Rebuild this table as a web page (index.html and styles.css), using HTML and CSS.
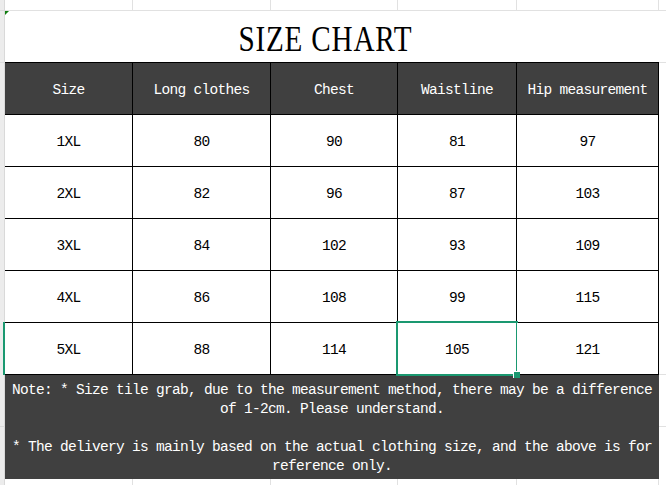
FILE: index.html
```html
<!DOCTYPE html>
<html>
<head>
<meta charset="utf-8">
<link rel="stylesheet" href="styles.css">
</head>
<body>
<div class="screen">
  <div class="rowheads">
    <div class="rh rh-a"></div>
    <div class="rh rh-b"></div>
    <div class="rh rh-c"></div>
    <div class="rh rh-sel"></div>
    <div class="rh rh-d"></div>
    <div class="rh rh-rest"></div>
  </div>
  <div class="sheet">
    <div class="band">
      <span></span><span></span><span></span><span></span><span></span>
    </div>
    <div class="title">
      <span class="flag"></span>
      <h1>SIZE CHART</h1>
    </div>
    <div class="chart">
      <div class="cell head">Size</div>
      <div class="cell head">Long clothes</div>
      <div class="cell head">Chest</div>
      <div class="cell head">Waistline</div>
      <div class="cell head">Hip measurement</div>

      <div class="cell">1XL</div><div class="cell">80</div><div class="cell">90</div><div class="cell">81</div><div class="cell">97</div>
      <div class="cell">2XL</div><div class="cell">82</div><div class="cell">96</div><div class="cell">87</div><div class="cell">103</div>
      <div class="cell">3XL</div><div class="cell">84</div><div class="cell">102</div><div class="cell">93</div><div class="cell">109</div>
      <div class="cell">4XL</div><div class="cell">86</div><div class="cell">108</div><div class="cell">99</div><div class="cell">115</div>
      <div class="cell">5XL</div><div class="cell">88</div><div class="cell">114</div><div class="cell selected">105</div><div class="cell">121</div>
    </div>
    <div class="note">
      <p>Note: * Size tile grab, due to the measurement method, there may be a difference of 1-2cm. Please understand.</p>
      <p>* The delivery is mainly based on the actual clothing size, and the above is for reference only.</p>
    </div>
    <div class="band bottom">
      <span></span><span></span><span></span><span></span><span></span>
    </div>
  </div>
  <div class="edge">
    <div class="eg eg-a"></div>
    <div class="eg eg-b"></div>
    <div class="eg eg-c"></div>
    <div class="eg eg-d"></div>
    <div class="eg eg-rest"></div>
  </div>
</div>
</body>
</html>
```

FILE: styles.css
```css
* { box-sizing: border-box; }
html, body { margin: 0; padding: 0; background: #fff; }
body { width: 666px; height: 485px; overflow: hidden; }

.screen {
  display: flex;
  width: 666px;
  height: 485px;
}

/* left row-header strip */
.rowheads {
  width: 5px;
  display: flex;
  flex-direction: column;
  flex: none;
}
.rh {
  background: #ececec;
  border-right: 1px solid #d9d9d9;
  border-bottom: 1px solid #dcdcdc;
}
.rh-a { height: 11px; }
.rh-b { height: 52px; }
.rh-c { height: 259px; border-bottom: none; }
.rh-sel { height: 53px; border-right: 2px solid #1a9870; border-bottom: none; }
.rh-d { height: 52px; }
.rh-rest { flex: 1; border-bottom: none; }

/* sheet */
.sheet {
  width: 654px;
  flex: none;
  display: flex;
  flex-direction: column;
}

.band {
  display: grid;
  grid-template-columns: 128px 138px 127px 119px 142px;
  height: 11px;
  border-bottom: 1px solid #e1e1e1;
}
.band span { border-right: 1px solid #e1e1e1; }
.band.bottom { height: 6px; border-bottom: none; }

.title {
  position: relative;
  height: 51px;
  padding: 10px 14px 0 0;
  text-align: center;
}
.title h1 {
  margin: 0;
  display: inline-block;
  font-family: "Liberation Serif", serif;
  font-weight: normal;
  font-size: 36px;
  line-height: 36px;
  letter-spacing: 1px;
  color: #000;
  transform: scaleX(0.81);
}
.flag {
  position: absolute;
  left: 0;
  top: 0;
  width: 0;
  height: 0;
  border-top: 4px solid #0e7d0e;
  border-right: 4px solid transparent;
}

.chart {
  display: grid;
  grid-template-columns: 127px 137px 126px 118px 141px;
  grid-auto-rows: 51px;
  gap: 1px;
  background: #000;
  border: 1px solid #000;
  border-left: none;
}
.cell {
  position: relative;
  background: #fff;
  display: flex;
  align-items: center;
  justify-content: center;
  font-family: "Liberation Mono", monospace;
  font-size: 14.5px;
  letter-spacing: -0.7px;
  color: #000;
  padding-top: 2px;
}
.cell.head {
  background: #404040;
  color: #fff;
}
.cell.selected::after {
  content: "";
  position: absolute;
  inset: -2px;
  border: 2px solid #1a9870;
}
.cell.selected::before {
  content: "";
  position: absolute;
  right: -4px;
  bottom: -4px;
  width: 6px;
  height: 6px;
  background: #1a9870;
  border-top: 1px solid #fff;
  border-left: 1px solid #fff;
  z-index: 2;
}

.note {
  height: 104px;
  background: #404040;
  color: #fff;
  padding: 6px 3px 0;
  text-align: center;
  font-family: "Liberation Mono", monospace;
  font-size: 14.5px;
  letter-spacing: -0.7px;
  line-height: 19px;
  display: flex;
  flex-direction: column;
  gap: 19px;
}
.note p { margin: 0; }

/* right edge gridlines */
.edge {
  flex: 1;
  display: flex;
  flex-direction: column;
}
.eg { border-bottom: 1px solid #e1e1e1; }
.eg-a { height: 11px; }
.eg-b { height: 52px; }
.eg-c { height: 312px; }
.eg-d { height: 52px; }
.eg-rest { flex: 1; border-bottom: none; }
```
